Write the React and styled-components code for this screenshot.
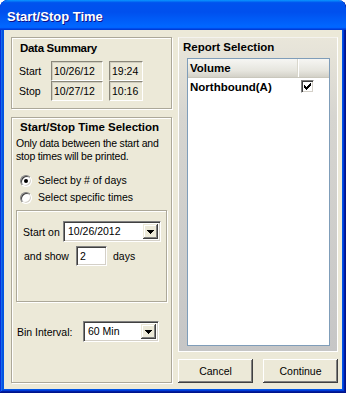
import React from "react";
import styled, { createGlobalStyle } from "styled-components";

const GlobalStyle = createGlobalStyle`
  html, body { margin: 0; padding: 0; background: #ffffff; }
  body {
    font-family: "Liberation Sans", Arial, sans-serif;
    font-size: 10.5px;
    color: #000;
  }
  * { box-sizing: border-box; }
`;

const Window = styled.div`
  width: 346px;
  height: 393px;
  display: flex;
  flex-direction: column;
  background: #0055e5;
  border-radius: 8px 8px 0 0;
  overflow: hidden;
  box-shadow: inset -1px -1px #00138c, inset 1px 0 #0831d9,
    inset -2px -2px #001ea0, inset 2px 0 #166aee, inset -3px -3px #003bda,
    inset 3px 0 #0855dd;
`;

const TitleBar = styled.div`
  flex: none;
  height: 30px;
  padding: 2px 0 0 7px;
  display: flex;
  align-items: center;
  border-radius: 8px 8px 0 0;
  background: linear-gradient(
    180deg,
    #0997ff 0%,
    #0053ee 9%,
    #0050ee 40%,
    #0066ff 86%,
    #0066ff 91%,
    #005bff 94%,
    #003dd7 96%,
    #003dd7 100%
  );
  color: #fff;
  font-family: "Liberation Sans", Arial, sans-serif;
  font-weight: bold;
  font-size: 13px;
  text-shadow: 1px 1px #0f1089;
`;

const Body = styled.div`
  flex: 1;
  min-height: 0;
  margin: 0 4px 4px;
  background: #ece9d8;
  display: flex;
  gap: 6px;
  padding: 7px 4px 6px 7px;
`;

const LeftCol = styled.div`
  width: 161px;
  display: flex;
  flex-direction: column;
  gap: 8px;
`;

const RightCol = styled.div`
  width: 160px;
  display: flex;
  flex-direction: column;
  gap: 7px;
`;

const Etched = styled.div`
  border: 1px solid #aca899;
  box-shadow: 1px 1px 0 #fff, inset 1px 1px 0 #fff;
`;

const SummaryBox = styled(Etched)`
  height: 72px;
  padding: 3px 0 0 7px;
`;

const SelectionBox = styled(Etched)`
  flex: 1;
  padding: 2px 4px 0 4px;
  display: flex;
  flex-direction: column;
`;

const GroupTitle = styled.div`
  font-weight: bold;
  font-size: 11.5px;
  line-height: 14px;
  margin-left: ${(p) => p.$indent || 0}px;
  letter-spacing: ${(p) => p.$tight || 0}px;
`;

const SummaryRows = styled.div`
  margin-top: 6px;
  display: flex;
  flex-direction: column;
`;

const SummaryRow = styled.div`
  display: flex;
  align-items: center;
  height: 20px;
`;

const RowLabel = styled.span`
  width: ${(p) => p.$w}px;
  flex: none;
  white-space: nowrap;
  margin-left: ${(p) => p.$ml || 0}px;
`;

const StaticField = styled.div`
  width: ${(p) => p.$w}px;
  height: 20px;
  margin-right: ${(p) => p.$mr || 0}px;
  padding: 1px 0 0 2px;
  border: 1px solid;
  border-color: #8a877a #fff #fff #8a877a;
  box-shadow: inset 1px 1px #d0cdbf;
  line-height: 16px;
  white-space: nowrap;
`;

const Para = styled.p`
  margin: 3px 0 0;
  line-height: 13px;
  letter-spacing: -0.2px;
`;

const RadioList = styled.div`
  margin-top: 9px;
  display: flex;
  flex-direction: column;
`;

const RadioRow = styled.label`
  height: 17px;
  display: flex;
  align-items: center;
  gap: 6px;
  padding-left: 4px;
  line-height: 17px;
`;

const RadioCircle = styled.span`
  width: 12px;
  height: 12px;
  border-radius: 50%;
  border: 1px solid;
  border-color: #808080 #fff #fff #808080;
  box-shadow: inset 1px 1px #404040, inset -1px -1px #d4d0c8;
  background: #fff;
  display: flex;
  align-items: center;
  justify-content: center;
  flex: none;
`;

const RadioDot = styled.span`
  width: 4px;
  height: 4px;
  border-radius: 50%;
  background: #000;
`;

const InnerBox = styled(Etched)`
  margin-top: 4px;
  height: 92px;
  padding: 10px 0 0 6px;
  display: flex;
  flex-direction: column;
  gap: 4px;
`;

const FieldRow = styled.div`
  display: flex;
  align-items: center;
  margin-top: ${(p) => p.$mt || 0}px;
`;

const Combo = styled.div`
  width: ${(p) => p.$w}px;
  height: 21px;
  display: flex;
  border: 1px solid;
  border-color: #808080 #fff #fff #808080;
  box-shadow: inset 1px 1px #404040, inset -1px -1px #d4d0c8;
  background: #fff;
  padding: 2px;
`;

const ComboText = styled.span`
  flex: 1;
  padding-left: 2px;
  line-height: 15px;
  white-space: nowrap;
`;

const ComboButton = styled.span`
  width: 15px;
  flex: none;
  background: #ece9d8;
  box-shadow: inset -1px -1px #404040, inset 1px 1px #ece9d8,
    inset -2px -2px #808080, inset 2px 2px #fff;
  display: flex;
  align-items: center;
  justify-content: center;
`;

const EditField = styled.div`
  width: ${(p) => p.$w}px;
  height: 20px;
  border: 1px solid;
  border-color: #808080 #fff #fff #808080;
  box-shadow: inset 1px 1px #404040, inset -1px -1px #d4d0c8;
  background: #fff;
  padding: 2px 0 0 3px;
  line-height: 15px;
`;

const Panel = styled.div`
  flex: 1;
  display: flex;
  flex-direction: column;
  border: 1px solid;
  border-color: #f4f3ee #fff #fff #fff;
  background: linear-gradient(180deg, #e9e6da 0%, #d6d5d0 25%, #c6c6c6 100%);
  padding: 2px 7px 5px 8px;
`;

const PanelTitle = styled(GroupTitle)`
  margin-left: -4px;
`;

const ListView = styled.div`
  flex: 1;
  margin-top: 4px;
  border: 1px solid #7f9db9;
  background: #fff;
  display: flex;
  flex-direction: column;
`;

const ListHeader = styled.div`
  height: 19px;
  display: flex;
  background: linear-gradient(180deg, #f6f6f3 0%, #e6e5de 65%, #d3d1c8 100%);
  border-bottom: 1px solid #c9c7bc;
`;

const HeaderCell = styled.div`
  width: ${(p) => (p.$w ? `${p.$w}px` : "auto")};
  flex: ${(p) => (p.$w ? "none" : 1)};
  padding-left: 2px;
  font-weight: bold;
  font-size: 11.5px;
  line-height: 19px;
  border-right: ${(p) => (p.$w ? "1px solid #d9d7cc" : "none")};
  box-shadow: ${(p) => (p.$w ? "1px 0 0 #fff" : "none")};
`;

const ListRow = styled.div`
  height: 17px;
  display: flex;
`;

const RowCell = styled.div`
  width: ${(p) => (p.$w ? `${p.$w}px` : "auto")};
  flex: ${(p) => (p.$w ? "none" : 1)};
  padding: 1px 0 0 2px;
  font-weight: bold;
  font-size: 11.5px;
  line-height: 17px;
  white-space: nowrap;
`;

const CheckCell = styled.div`
  flex: 1;
  padding: 2px 0 0 2px;
`;

const CheckBox = styled.span`
  width: 13px;
  height: 13px;
  display: block;
  border: 1px solid;
  border-color: #808080 #fff #fff #808080;
  box-shadow: inset 1px 1px #404040, inset -1px -1px #d4d0c8;
  background: #fff;
  position: relative;
`;

const ButtonRow = styled.div`
  height: 24px;
  display: flex;
  justify-content: space-between;
`;

const Button = styled.button`
  width: 75px;
  height: 24px;
  margin: 0;
  padding: 0;
  border: none;
  background: #ece9d8;
  font-family: "Liberation Sans", Arial, sans-serif;
  font-size: 10.5px;
  color: #000;
  box-shadow: inset -1px -1px #404040, inset 1px 1px #fff,
    inset -2px -2px #808080, inset 2px 2px #ece9d8;
`;

const DownArrow = () => (
  <svg width="7" height="4" viewBox="0 0 7 4" shapeRendering="crispEdges">
    <polygon points="0,0 7,0 3.5,4" fill="#000" />
  </svg>
);

const CheckMark = () => (
  <svg
    width="7"
    height="7"
    viewBox="0 0 7 7"
    shapeRendering="crispEdges"
    style={{ position: "absolute", left: 2, top: 2 }}
  >
    <rect x="6" y="0" width="1" height="1" />
    <rect x="5" y="1" width="2" height="1" />
    <rect x="0" y="2" width="1" height="1" />
    <rect x="4" y="2" width="3" height="1" />
    <rect x="0" y="3" width="2" height="1" />
    <rect x="3" y="3" width="3" height="1" />
    <rect x="0" y="4" width="5" height="1" />
    <rect x="1" y="5" width="3" height="1" />
    <rect x="2" y="6" width="1" height="1" />
  </svg>
);

const Radio = ({ checked, children }) => (
  <RadioRow>
    <RadioCircle>{checked && <RadioDot />}</RadioCircle>
    <span>{children}</span>
  </RadioRow>
);

export default function App() {
  return (
    <>
      <GlobalStyle />
      <Window>
        <TitleBar>Start/Stop Time</TitleBar>
        <Body>
          <LeftCol>
            <SummaryBox>
              <GroupTitle $indent={1} $tight={-0.3}>
                Data Summary
              </GroupTitle>
              <SummaryRows>
                <SummaryRow>
                  <RowLabel $w={32}>Start</RowLabel>
                  <StaticField $w={52} $mr={6}>
                    10/26/12
                  </StaticField>
                  <StaticField $w={34}>19:24</StaticField>
                </SummaryRow>
                <SummaryRow>
                  <RowLabel $w={32}>Stop</RowLabel>
                  <StaticField $w={52} $mr={6}>
                    10/27/12
                  </StaticField>
                  <StaticField $w={34}>10:16</StaticField>
                </SummaryRow>
              </SummaryRows>
            </SummaryBox>

            <SelectionBox>
              <GroupTitle $indent={4}>Start/Stop Time Selection</GroupTitle>
              <Para>
                Only data between the start and
                <br />
                stop times will be printed.
              </Para>
              <RadioList>
                <Radio checked>Select by # of days</Radio>
                <Radio>Select specific times</Radio>
              </RadioList>
              <InnerBox>
                <FieldRow>
                  <RowLabel $w={40}>Start on</RowLabel>
                  <Combo $w={98}>
                    <ComboText>10/26/2012</ComboText>
                    <ComboButton>
                      <DownArrow />
                    </ComboButton>
                  </Combo>
                </FieldRow>
                <FieldRow>
                  <RowLabel $w={52} $ml={1}>
                    and show
                  </RowLabel>
                  <EditField $w={31}>2</EditField>
                  <RowLabel $w={30} $ml={6}>
                    days
                  </RowLabel>
                </FieldRow>
              </InnerBox>
              <FieldRow $mt={19}>
                <RowLabel $w={66} $ml={1}>
                  Bin Interval:
                </RowLabel>
                <Combo $w={76}>
                  <ComboText>60 Min</ComboText>
                  <ComboButton>
                    <DownArrow />
                  </ComboButton>
                </Combo>
              </FieldRow>
            </SelectionBox>
          </LeftCol>

          <RightCol>
            <Panel>
              <PanelTitle $indent={0}>Report Selection</PanelTitle>
              <ListView>
                <ListHeader>
                  <HeaderCell $w={110}>Volume</HeaderCell>
                  <HeaderCell />
                </ListHeader>
                <ListRow>
                  <RowCell $w={111}>Northbound(A)</RowCell>
                  <CheckCell>
                    <CheckBox>
                      <CheckMark />
                    </CheckBox>
                  </CheckCell>
                </ListRow>
              </ListView>
            </Panel>
            <ButtonRow>
              <Button>Cancel</Button>
              <Button>Continue</Button>
            </ButtonRow>
          </RightCol>
        </Body>
      </Window>
    </>
  );
}
